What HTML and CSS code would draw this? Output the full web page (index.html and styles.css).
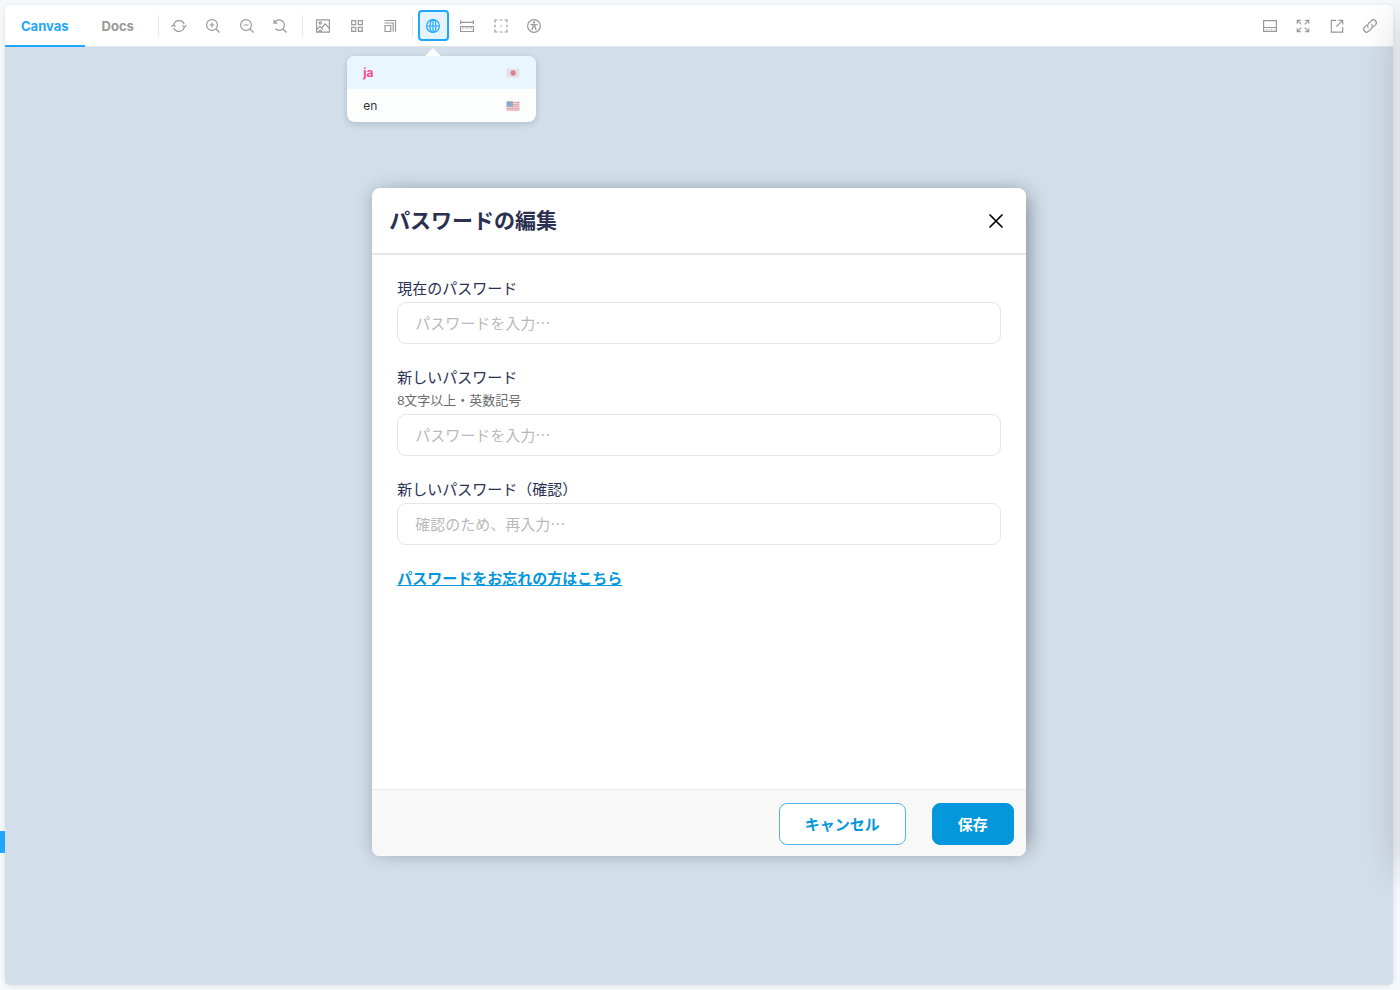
FILE: index.html
```html
<!DOCTYPE html>
<html lang="ja">
<head>
<meta charset="utf-8">
<title>パスワードの編集</title>
<link rel="stylesheet" href="styles.css">
</head>
<body>
<div class="preview">
  <header class="toolbar">
    <nav class="tabs">
      <a class="tab tab-active" href="#canvas">Canvas</a>
      <a class="tab" href="#docs">Docs</a>
    </nav>
    <div class="group group-four">
      <button class="tool" type="button" aria-label="Remount"><svg class="icon" viewBox="0 0 14 14"><path d="M1.700 6.500a5.400 5.400 0 0 1 10.500-1.200M12.300 7.500a5.400 5.400 0 0 1-10.500 1.200M-.4 7.700 1.600 5.900l2.100 1.700M10.300 6.400l2.100 1.700 2-1.800"/></svg></button>
      <button class="tool" type="button" aria-label="Zoom in"><svg class="icon" viewBox="0 0 14 14"><circle cx="6" cy="6" r="5.4"/><path d="M10 10l3.500 3.500M3.500 6h5M6 3.500v5"/></svg></button>
      <button class="tool" type="button" aria-label="Zoom out"><svg class="icon" viewBox="0 0 14 14"><circle cx="6" cy="6" r="5.4"/><path d="M10 10l3.500 3.500M3.500 6h5"/></svg></button>
      <button class="tool" type="button" aria-label="Reset zoom"><svg class="icon" viewBox="0 0 14 14"><path d="M1.500 3.800A5.200 5.200 0 1 1 2.300 9.700M10 10l3.500 3.500M1 .800v3.400h3.500"/></svg></button>
    </div>
    <div class="group group-three">
      <button class="tool" type="button" aria-label="Backgrounds"><svg class="icon" viewBox="0 0 14 14"><path d="M.6.9h12.800v12.200H.6zM.6 10.800l3.300-3.500 3.200 3.400M5.600 9l3.600-4.100 4.200 4.600M2.200 13l2-1.900 2 1.900"/><circle cx="4.300" cy="4" r="1.100"/></svg></button>
      <button class="tool" type="button" aria-label="Grid"><svg class="icon" viewBox="0 0 14 14"><path d="M1.700 1.700h4v4h-4zM8.300 1.700h4v4h-4zM1.700 8.300h4v4h-4zM8.300 8.300h4v4h-4z"/></svg></button>
      <button class="tool" type="button" aria-label="Viewport"><svg class="icon" viewBox="0 0 14 14"><path d="M2 6.500h5.700v6H2zM1.500 4h8.700v8.800M1.500 1.500h11v11.300"/></svg></button>
    </div>
    <div class="group group-four">
      <div class="locale">
        <button class="tool tool-active" type="button" aria-label="Locale" aria-expanded="true"><svg class="icon" viewBox="0 0 14 14"><circle cx="7" cy="7" r="6.400"/><ellipse cx="7" cy="7" rx="3" ry="6.400"/><path d="M.6 7h12.800M7 .6v12.800"/></svg></button>
        <div class="menu">
          <button class="option option-active" type="button"><span>ja</span><svg class="flag" viewBox="0 0 14 10"><path fill="#e0e3e6" d="M.5.500q3.500-.5 6.500 0t6.500-.3v9q-3.500.8-6.500.3T.5 9.800z"/><circle cx="7.200" cy="5" r="2.700" fill="#dc7f97"/></svg></button>
          <button class="option" type="button"><span>en</span><svg class="flag" viewBox="0 0 14 10"><path fill="#f1d8dd" d="M.5.500q3.500-.5 6.500 0t6.500-.3v9q-3.500.8-6.500.3T.5 9.800z"/><path fill="none" stroke="#e2a0a8" d="M7 1.500q3 .4 6.500-.5M7 3.500q3 .4 6.500-.5M7 5.500q3 .4 6.500-.5M.5 7.500q3.500-.5 6.500 0t6.500-.5M.5 9.200q3.500-.5 6.500 0t6.500-.5"/><path fill="#8fa9cb" d="M.5.500q3.500-.5 6.500 0v5.500q-3-.5-6.500 0z"/></svg></button>
        </div>
      </div>
      <button class="tool" type="button" aria-label="Measure"><svg class="icon" viewBox="0 0 14 14"><path d="M.6 1.300v4M13.400 1.300v4M.6 3.300h12.800M.6 7.500h12.800v5H.6z"/><path class="thin" d="M3 7.500v2.700M5 7.500v1.800M7 7.500v2.700M9 7.500v1.800M11 7.500v2.700"/></svg></button>
      <button class="tool" type="button" aria-label="Outline"><svg class="icon" viewBox="0 0 14 14"><path d="M1 3.500V1h2.500M5.700 1h2.600M10.500 1H13v2.500M13 5.700v2.600M13 10.500V13h-2.500M8.300 13H5.700M3.500 13H1v-2.500M1 8.300V5.700M6.300 7h1.400"/></svg></button>
      <button class="tool" type="button" aria-label="Vision"><svg class="icon" viewBox="0 0 14 14"><circle cx="7" cy="7" r="6.400"/><circle cx="7" cy="3.400" r=".6"/><path d="M3.500 5.300 6 5.700v2.600L4.700 11.300M10.500 5.300 8 5.700v2.600l1.300 3M6 5.700h2M6.300 8h1.400"/></svg></button>
    </div>
    <div class="group group-four group-end">
      <button class="tool" type="button" aria-label="Show addons"><svg class="icon" viewBox="0 0 14 14"><path d="M.6 1.600h12.800v10.800H.6zM.6 8.500h12.800"/><path class="thin" d="M3 10.500h1M5.500 10.500h1M8 10.500h1M10.500 10.500h1"/></svg></button>
      <button class="tool" type="button" aria-label="Full screen"><svg class="icon" viewBox="0 0 14 14"><path d="M1.300 4.800V1.300h3.500M1.300 1.300l4 4M9.200 1.300h3.500v3.500M12.700 1.300l-4 4M12.700 9.200v3.500H9.200M12.700 12.700l-4-4M4.800 12.700H1.300V9.200M1.300 12.700l4-4"/></svg></button>
      <button class="tool" type="button" aria-label="Open in new tab"><svg class="icon" viewBox="0 0 14 14"><path d="M6 1.300H1.300v11.800h11.400V8M8.500 1.300h4.200v4.200M12.700 1.300 6.500 7.500"/></svg></button>
      <button class="tool" type="button" aria-label="Copy link"><svg class="icon" viewBox="0 0 14 14"><path d="M5.500 8.800a3 3 0 0 1 .1-4.300l2.800-2.800a2.900 2.900 0 0 1 4.100 4.100l-2.300 2.300M8.500 5.200a3 3 0 0 1-.1 4.300l-2.800 2.800a2.900 2.900 0 0 1-4.100-4.100l2.300-2.300"/></svg></button>
    </div>
  </header>
  <main class="stage">
    <form class="modal">
      <div class="modal-head">
        <h1 class="title">パスワードの編集</h1>
        <button class="close" type="button" aria-label="閉じる"><svg class="cross" viewBox="0 0 14 14"><path d="M1 1l12 12M13 1 1 13"/></svg></button>
      </div>
      <div class="modal-body">
        <div class="field">
          <label class="label" for="current">現在のパスワード</label>
          <input class="input" id="current" type="password" placeholder="パスワードを入力…">
        </div>
        <div class="field">
          <label class="label" for="next">新しいパスワード</label>
          <p class="hint">8文字以上・英数記号</p>
          <input class="input" id="next" type="password" placeholder="パスワードを入力…">
        </div>
        <div class="field">
          <label class="label" for="confirm">新しいパスワード（確認）</label>
          <input class="input" id="confirm" type="password" placeholder="確認のため、再入力…">
        </div>
        <a class="forgot" href="#forgot">パスワードをお忘れの方はこちら</a>
      </div>
      <div class="modal-foot">
        <button class="button" type="button">キャンセル</button>
        <button class="button button-primary" type="button">保存</button>
      </div>
    </form>
  </main>
</div>
<div class="side-mark"></div>
<div class="edge-shade"></div>
</body>
</html>
```
FILE: styles.css
```css
* { box-sizing: border-box; }

body {
  position: relative;
  display: flex;
  min-height: 100vh;
  margin: 0;
  padding: 5px 7px 5px 5px;
  overflow: hidden;
  background: #f6f9fc;
  font-family: Inter, "Noto Sans CJK JP", sans-serif;
}

button, input { font: inherit; }

button {
  padding: 0;
  border: 0;
  background: none;
}

.preview {
  display: flex;
  flex: 1;
  flex-direction: column;
  border-radius: 5px;
  background: #d2dee9;
  box-shadow: 0 1px 5px rgba(0, 0, 0, 0.1);
}

.toolbar {
  display: flex;
  align-items: center;
  height: 42px;
  padding-right: 7px;
  border-bottom: 1px solid #e3e6e9;
  border-radius: 5px 5px 0 0;
  background: #fff;
}

.tabs {
  display: flex;
  gap: 1px;
  align-self: stretch;
  margin-right: 2px;
}

.tab {
  display: flex;
  align-items: center;
  height: 42px;
  padding: 0 16px;
  border-top: 2px solid transparent;
  border-bottom: 2px solid transparent;
  color: #999;
  font-size: 13px;
  font-weight: 700;
  text-decoration: none;
}

.tab-active {
  border-bottom-color: #1ea7fd;
  color: #1ea7fd;
}

.group {
  position: relative;
  display: flex;
  justify-content: space-between;
  margin-left: 12px;
}

.group::before {
  position: absolute;
  top: 5px;
  bottom: 5px;
  left: -6px;
  width: 1px;
  background: #e6e6e6;
  content: "";
}

.group-four { width: 132px; }
.group-three { width: 98px; }
.group-end { margin-left: auto; }
.group-end::before { display: none; }

.tool {
  display: flex;
  align-items: center;
  justify-content: center;
  width: 31px;
  height: 31px;
  border-radius: 4px;
  color: #999;
}

.tool-active {
  border: 2px solid #1ea7fd;
  background: #e3f3ff;
  color: #1ea7fd;
}

.icon {
  width: 14px;
  height: 14px;
  overflow: visible;
  fill: none;
  stroke: currentColor;
  stroke-width: 1.2;
}

.thin { stroke-width: 0.8; }

.locale { position: relative; }

.menu {
  position: absolute;
  z-index: 1;
  top: 46px;
  left: 50%;
  width: 189px;
  margin-left: -86px;
  border-radius: 8px;
  background: #fcfefe;
  box-shadow: 0 2px 6px rgba(30, 60, 90, 0.2);
}

.menu::before {
  position: absolute;
  top: -8px;
  left: 78px;
  border: 8px solid transparent;
  border-top: 0;
  border-bottom-color: #fcfefe;
  content: "";
}

.option {
  display: flex;
  align-items: center;
  justify-content: space-between;
  width: 100%;
  height: 33px;
  padding: 0 16px;
  color: #333;
  font-size: 12px;
}

.option-active {
  border-radius: 8px 8px 0 0;
  background: #eaf6fd;
  color: #ff4785;
  font-weight: 700;
}

.flag {
  width: 14px;
  height: 10px;
}

.stage {
  display: flex;
  flex: 1;
  align-items: flex-start;
  justify-content: center;
  padding-top: 141px;
}

.modal {
  display: flex;
  flex-direction: column;
  width: 47.1%;
  min-height: 668px;
  border-radius: 8px;
  background: #fff;
  box-shadow:
    12px 0 18px -10px rgba(40, 55, 70, 0.4),
    -4px 0 14px -6px rgba(40, 55, 70, 0.2),
    0 0 18px rgba(40, 60, 90, 0.16);
}

.modal-head {
  display: flex;
  align-items: center;
  justify-content: space-between;
  height: 67px;
  padding: 0 23px 0 17px;
  border-bottom: 2px solid #e5e5e7;
}

.title {
  margin: 0;
  color: #2a3050;
  font-size: 21px;
  font-weight: 700;
  line-height: 30px;
}

.close {
  display: flex;
}

.cross {
  width: 14px;
  height: 14px;
  overflow: visible;
  fill: none;
  stroke: #000;
  stroke-linecap: round;
  stroke-width: 1.7;
}

.modal-body {
  display: flex;
  flex: 1;
  flex-direction: column;
  gap: 22px;
  padding: 22px 25px;
}

.field {
  display: flex;
  flex-direction: column;
}

.label {
  margin-bottom: 2px;
  color: #2a3050;
  font-size: 15px;
  line-height: 23px;
}

.hint {
  margin: 0 0 3px;
  color: #6b6b6b;
  font-family: "Liberation Sans", "Noto Sans CJK JP", sans-serif;
  font-size: 13px;
  line-height: 20px;
}

.input {
  height: 42px;
  padding: 0 17px 2px;
  border: 1px solid #e6e6e8;
  border-radius: 9px;
  background: #fff;
  font-family: "Noto Sans CJK JP", sans-serif;
  font-size: 15px;
}

.input::placeholder {
  color: #bababa;
  opacity: 1;
}

.forgot {
  align-self: flex-start;
  color: #0497dc;
  font-size: 15px;
  font-weight: 700;
  line-height: 24px;
}

.modal-foot {
  display: flex;
  align-items: center;
  justify-content: flex-end;
  gap: 26px;
  height: 67px;
  padding: 1px 12px 0;
  border-top: 1px solid #ececec;
  border-radius: 0 0 8px 8px;
  background: #f8f8f8;
}

.button {
  height: 42px;
  padding: 0 25px;
  border: 1px solid #4fb5e8;
  border-radius: 8px;
  background: #fff;
  color: #0497dc;
  font-size: 15px;
  font-weight: 700;
}

.button-primary {
  border-color: #0497dc;
  background: #0497dc;
  color: #fff;
}

.side-mark {
  position: absolute;
  top: 831px;
  left: 0;
  width: 5px;
  height: 22px;
  background: #1ea7fd;
}

.edge-shade {
  position: absolute;
  top: 20px;
  bottom: 120px;
  left: 100%;
  width: 40px;
  box-shadow: 0 0 40px rgba(0, 0, 0, 0.2);
  pointer-events: none;
}
```
